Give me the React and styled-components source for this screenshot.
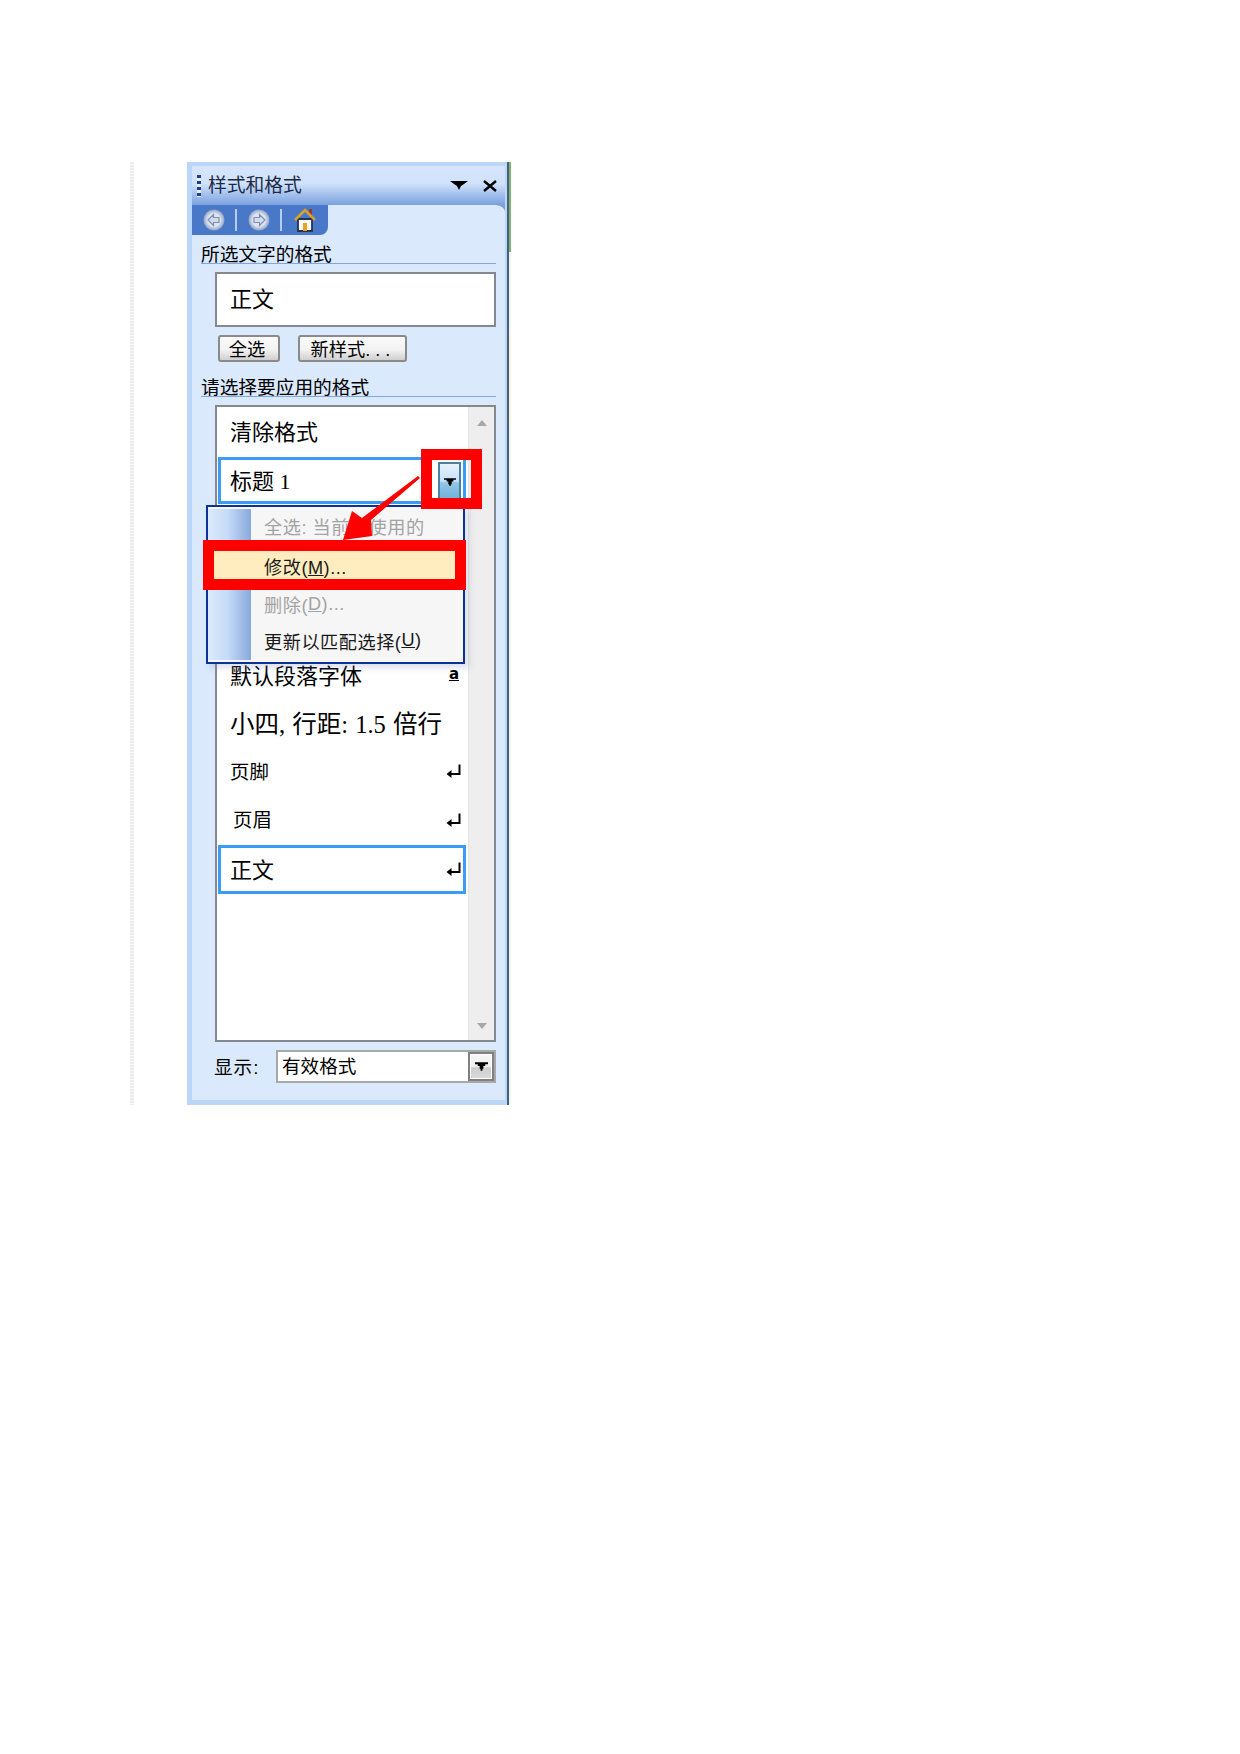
import React from 'react'
import styled, { createGlobalStyle } from 'styled-components'

const GlobalStyle = createGlobalStyle`
  html, body { margin: 0; padding: 0; background: #fff; }
  body { font-family: "Liberation Sans", "Noto Sans CJK SC", sans-serif; color: #000; }
  * { box-sizing: border-box; }
`

const Page = styled.div`
  display: flex;
  align-items: flex-start;
  min-height: 1754px;
  padding: 162px 0 0 130px;
`
const DottedRule = styled.div`
  width: 4px;
  height: 943px;
  margin-right: 53px;
  background: repeating-linear-gradient(to bottom, #ececec 0 2px, #f7f7f7 2px 3px);
`
const Panel = styled.div`
  position: relative;
  width: 320px;
  height: 943px;
  background: #dbe9fd;
  border-style: solid;
  border-color: #bcd6f8;
  border-width: 4px 2px 5px 5px;
`
const EdgeStrip = styled.div`
  width: 4px;
  height: 943px;
  border-left: 2px solid #44607f;
  background: linear-gradient(to bottom, #7fb26c 0 90px, #f1f6ec 90px 170px, #fdf5d6 170px 260px, #f0f6ec 260px);
`
const TitleBar = styled.div`
  display: flex;
  align-items: center;
  height: 39px;
  padding: 0 8px 0 5px;
  background: linear-gradient(to bottom, #d5e5fc 0, #d0e2fb 45%, #7aa1df 100%);
`
const Grip = styled.div`
  width: 4px;
  height: 22px;
  margin-right: 7px;
  background: repeating-linear-gradient(to bottom, #24407c 0 3px, #e4eefd 3px 6px);
`
const Title = styled.div`
  flex: 1;
  font-size: 18.8px;
  line-height: 39px;
  color: #1c2a48;
`
const TitleIcon = styled.svg`
  display: block;
  margin-left: ${(p) => p.$gap || 0}px;
`
const NavRow = styled.div`
  display: flex;
  justify-content: space-between;
  height: 30px;
`
const NavTab = styled.div`
  display: flex;
  align-items: center;
  width: 136px;
  padding-left: 11px;
  background: #4a78c8;
  border-bottom-right-radius: 8px;
`
const NavSep = styled.div`
  width: 2px;
  height: 22px;
  margin: 0 ${(p) => p.$after || 11}px 0 10px;
  background: #b5cff3;
`
const Corner = styled.div`
  width: 8px;
  height: 9px;
  background: radial-gradient(circle at 0 100%, #dbe9fd 8px, #7aa1df 9px);
`
const SectionHead = styled.div`
  height: ${(p) => p.$height}px;
  margin: 0 9px;
  border-bottom: 1px solid #7ea6e4;
  font-size: 18.7px;
  line-height: 1;
  display: flex;
  align-items: flex-end;
  white-space: nowrap;
`
const HeadText = styled.span`
  position: relative;
  top: 2px;
`
const CurrentBox = styled.div`
  display: flex;
  align-items: center;
  height: 55px;
  margin: 8px 9px 0 23px;
  padding: 0 0 5px 13px;
  background: #fff;
  border: 2px solid #84898f;
  font-size: 22px;
`
const ButtonRow = styled.div`
  display: flex;
  gap: 18px;
  margin: 8px 0 0 26px;
`
const SmallButton = styled.div`
  display: flex;
  align-items: center;
  justify-content: center;
  width: ${(p) => p.$width}px;
  height: 27px;
  padding: 0 4px 2px 0;
  border: 2px solid #8a8a8a;
  border-radius: 3px;
  background: linear-gradient(to bottom, #fafafa 0, #f2f2f2 55%, #cfcfcf 100%);
  font-size: 18.2px;
  white-space: nowrap;
`
const ListBox = styled.div`
  display: flex;
  height: 637px;
  margin: 8px 9px 0 23px;
  background: #fff;
  border: 2px solid #84898f;
`
const Rows = styled.div`
  flex: 1;
  padding: 0 2px 0 1px;
`
const Row = styled.div`
  display: flex;
  align-items: center;
  justify-content: space-between;
  height: ${(p) => p.$height}px;
  padding: 0 ${(p) => p.$right ?? 2}px 4px ${(p) => 9 + (p.$indent || 0)}px;
  border: 3px solid ${(p) => (p.$active ? '#3b9bf5' : 'transparent')};
  font-family: "Liberation Serif", "Noto Sans CJK SC", serif;
  font-size: ${(p) => p.$size || 22}px;
  word-spacing: ${(p) => p.$wordGap || 0}px;
  white-space: nowrap;
`
const Spacer = styled.div`
  height: ${(p) => p.$height}px;
`
const StyleMark = styled.span`
  font-family: "DejaVu Sans", sans-serif;
  font-size: 15px;
  font-weight: 700;
  line-height: 15px;
  text-decoration: underline;
  margin: 0 2px 0 0;
`
const ReturnSlot = styled.span`
  display: block;
  margin-top: 4px;
`
const RowDrop = styled.div`
  display: flex;
  align-items: center;
  justify-content: center;
  width: 23px;
  height: 40px;
  margin-top: 7px;
  border: 2px solid #4f7f9f;
  background: linear-gradient(to bottom, #e6f2fd 0, #c6e0f7 48%, #93c6e6 52%, #6db1dc 100%);
`
const Scrollbar = styled.div`
  display: flex;
  flex-direction: column;
  justify-content: space-between;
  align-items: center;
  width: 26px;
  padding: 13px 0 11px;
  background: #eeeeee;
  border-left: 1px solid #e4e4e4;
`
const ComboRow = styled.div`
  display: flex;
  align-items: center;
  margin: 8px 9px 0 22px;
`
const ComboLabel = styled.div`
  width: 62px;
  padding-bottom: 3px;
  font-size: 18.6px;
  letter-spacing: 1px;
  white-space: nowrap;
`
const Combo = styled.div`
  display: flex;
  align-items: stretch;
  justify-content: space-between;
  flex: 1;
  height: 33px;
  background: #fff;
  border: 2px solid #a8a8a8;
`
const ComboValue = styled.div`
  padding-left: 4px;
  font-size: 18.6px;
  line-height: 29px;
`
const ComboDrop = styled.div`
  display: flex;
  align-items: center;
  justify-content: center;
  width: 26px;
  border: 2px solid #808080;
  box-shadow: inset 0 0 0 1px #fff;
  background: linear-gradient(to bottom, #f6f6f6 0, #f0f0f0 50%, #cfcfcf 55%, #dcdcdc 100%);
`
/* menu, red marks and the arrow lie over the list */
const Menu = styled.div`
  position: absolute;
  left: 14px;
  top: 339px;
  width: 259px;
  height: 159px;
  padding: 2px 0;
  display: flex;
  background: #f6f6f6;
  border: 2px solid #0a3299;
  box-shadow: 4px 4px 6px rgba(120, 130, 170, 0.25);
`
const MenuStrip = styled.div`
  width: 43px;
  background: linear-gradient(to right, #dceafd 0, #c5dbf8 45%, #89a9dc 100%);
`
const MenuItems = styled.div`
  flex: 1;
  padding-top: 1px;
`
const MenuItem = styled.div`
  height: ${(p) => p.$height || 37}px;
  padding: 0 0 6px 13px;
  display: flex;
  align-items: center;
  font-size: 18.2px;
  letter-spacing: 0.5px;
  white-space: nowrap;
  color: ${(p) => (p.$disabled ? '#a3a3a3' : '#1a1a1a')};
`
const Key = styled.span`
  text-decoration: underline;
`
const RedMark = styled.div`
  position: absolute;
  left: ${(p) => p.$left}px;
  top: ${(p) => p.$top}px;
  width: ${(p) => p.$width}px;
  height: ${(p) => p.$height}px;
  border: 11px solid #ff0000;
  background: ${(p) => p.$fill || 'transparent'};
`
const MarkText = styled.div`
  height: 28px;
  padding-left: 50px;
  font-size: 18.2px;
  letter-spacing: 0.5px;
  line-height: 34px;
  white-space: nowrap;
  color: #1a1a1a;
`
const ArrowOverlay = styled.svg`
  position: absolute;
  left: 150px;
  top: 308px;
`

function DownArrow({ width = 14, height = 9, fill = '#000' }) {
  return (
    <svg width={width} height={height} viewBox="0 0 14 9" style={{ display: 'block' }}>
      <path d="M0 0H14V2H11V4H9V7H8V9H6V7H5V4H3V2H0Z" fill={fill} />
    </svg>
  )
}

function ReturnMark() {
  return (
    <ReturnSlot>
      <svg width="15" height="16" viewBox="0 0 15 16" style={{ display: 'block' }}>
        <path d="M13.5 0.5V10H3" fill="none" stroke="#000" strokeWidth="2" />
        <path d="M0.5 10L5.5 6V14Z" fill="#000" />
      </svg>
    </ReturnSlot>
  )
}

function NavCircle({ dir }) {
  const id = 'disc' + dir
  return (
    <svg width="22" height="22" viewBox="0 0 22 22" style={{ display: 'block', flexShrink: 0 }}>
      <defs>
        <radialGradient id={id}>
          <stop offset="0.6" stopColor="#dfe5ee" />
          <stop offset="1" stopColor="#8fa3c6" />
        </radialGradient>
      </defs>
      <circle cx="11" cy="11" r="10.5" fill={`url(#${id})`} />
      <path
        d={dir === 'left' ? 'M5 11L10.5 5.5V8.5H16V13.5H10.5V16.5Z' : 'M17 11L11.5 5.5V8.5H6V13.5H11.5V16.5Z'}
        fill="#d4dcea"
        stroke="#7c92bb"
        strokeWidth="1.2"
      />
    </svg>
  )
}

function HomeIcon() {
  return (
    <svg width="22" height="24" viewBox="0 0 22 24" style={{ display: 'block', flexShrink: 0 }}>
      <path d="M15 1H18V7H15Z" fill="#9c3a2c" />
      <path d="M4 11H18V23H4Z" fill="#fff" stroke="#26344e" strokeWidth="1.8" />
      <path d="M9 15H13V23H9Z" fill="#e9a21a" />
      <path d="M1 12L11 2L21 12" fill="none" stroke="#d9a02a" strokeWidth="2.6" />
    </svg>
  )
}

function ScrollArrow({ up }) {
  return (
    <svg width="10" height="6" viewBox="0 0 10 6" style={{ display: 'block' }}>
      <path d={up ? 'M5 0L10 6H0Z' : 'M0 0H10L5 6Z'} fill="#a8a8a8" />
    </svg>
  )
}

export default function App() {
  return (
    <Page>
      <GlobalStyle />
      <DottedRule />
      <Panel>
        <TitleBar>
          <Grip />
          <Title>样式和格式</Title>
          <TitleIcon width="18" height="9" viewBox="0 0 18 9">
            <path d="M0 0H18L14 3L11 5L9 9L7 5L4 3Z" fill="#000" />
          </TitleIcon>
          <TitleIcon $gap={15} width="14" height="12" viewBox="0 0 14 12">
            <path d="M1 1L13 11M13 1L1 11" stroke="#000" strokeWidth="2.4" />
          </TitleIcon>
        </TitleBar>
        <NavRow>
          <NavTab>
            <NavCircle dir="left" />
            <NavSep />
            <NavCircle dir="right" />
            <NavSep $after={12} />
            <HomeIcon />
          </NavTab>
          <Corner />
        </NavRow>
        <SectionHead $height={29}><HeadText>所选文字的格式</HeadText></SectionHead>
        <CurrentBox>正文</CurrentBox>
        <ButtonRow>
          <SmallButton $width={62}>全选</SmallButton>
          <SmallButton $width={109}>新样式. . .</SmallButton>
        </ButtonRow>
        <SectionHead $height={35}><HeadText>请选择要应用的格式</HeadText></SectionHead>
        <ListBox>
          <Rows>
            <Row $height={50}>清除格式</Row>
            <Row $height={47} $active>
              标题 1
              <RowDrop><DownArrow width={12} height={8} /></RowDrop>
            </Row>
            <Spacer $height={147} />
            <Row $height={50}>默认段落字体<StyleMark>a</StyleMark></Row>
            <Row $height={47} $size={24.5} $wordGap={1}>小四, 行距: 1.5 倍行</Row>
            <Row $height={48} $size={19.4}>页脚<ReturnMark /></Row>
            <Row $height={49} $size={19.4} $indent={3}>页眉<ReturnMark /></Row>
            <Row $height={49} $active>正文<ReturnMark /></Row>
          </Rows>
          <Scrollbar>
            <ScrollArrow up />
            <ScrollArrow />
          </Scrollbar>
        </ListBox>
        <ComboRow>
          <ComboLabel>显示:</ComboLabel>
          <Combo>
            <ComboValue>有效格式</ComboValue>
            <ComboDrop><DownArrow width={13} height={9} /></ComboDrop>
          </Combo>
        </ComboRow>

        <Menu>
          <MenuStrip />
          <MenuItems>
            <MenuItem $disabled>全选: 当前未使用的</MenuItem>
            <MenuItem $height={42} />
            <MenuItem $disabled $height={36}>删除(<Key>D</Key>)...</MenuItem>
            <MenuItem>更新以匹配选择(<Key>U</Key>)</MenuItem>
          </MenuItems>
        </Menu>
        <RedMark $left={229} $top={283} $width={61} $height={60} />
        <ArrowOverlay width="80" height="70" viewBox="0 0 80 70">
          <path d="M76 2L78 4L29 46L30 62L1 66L10 37L20 44Z" fill="#ff0000" />
        </ArrowOverlay>
        <RedMark $left={11} $top={374} $width={263} $height={50} $fill="#ffedc0">
          <MarkText>修改(<Key>M</Key>)...</MarkText>
        </RedMark>
      </Panel>
      <EdgeStrip />
    </Page>
  )
}
